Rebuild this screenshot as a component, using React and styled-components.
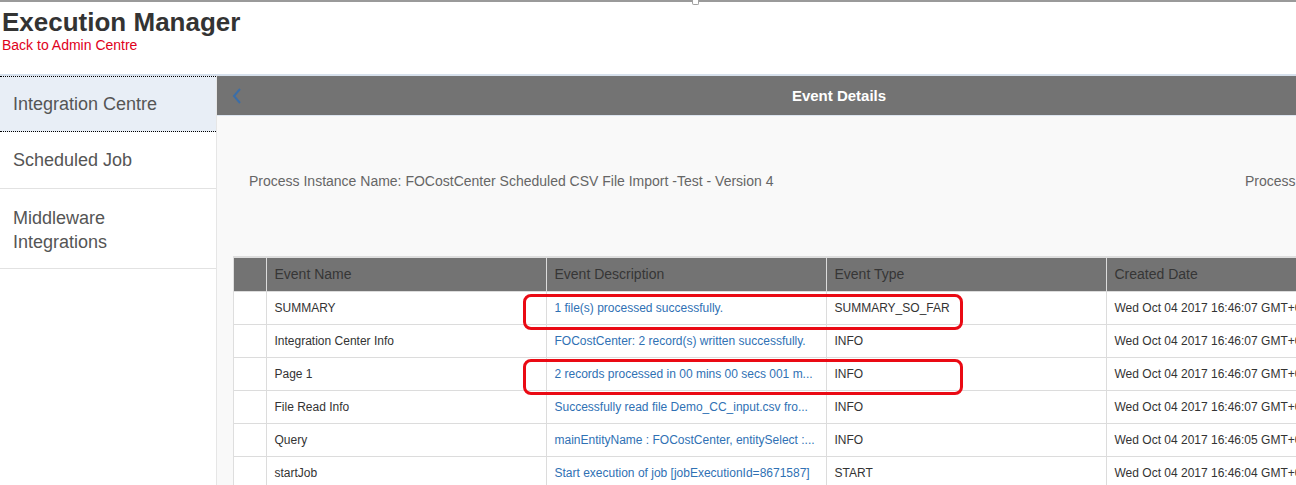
import React from "react";
import styled, { createGlobalStyle } from "styled-components";

const GlobalStyle = createGlobalStyle`
  html, body {
    margin: 0;
    padding: 0;
    background: #ffffff;
    overflow: hidden;
  }
  body {
    font-family: "Liberation Sans", Arial, sans-serif;
    color: #333;
  }
`;

// descriptions are cut the way the grid shows them
const rows = [
  {
    name: "SUMMARY",
    desc: "1 file(s) processed successfully.",
    type: "SUMMARY_SO_FAR",
    date: "Wed Oct 04 2017 16:46:07 GMT+0",
  },
  {
    name: "Integration Center Info",
    desc: "FOCostCenter: 2 record(s) written successfully.",
    type: "INFO",
    date: "Wed Oct 04 2017 16:46:07 GMT+0",
  },
  {
    name: "Page 1",
    desc: "2 records processed in 00 mins 00 secs 001 m...",
    type: "INFO",
    date: "Wed Oct 04 2017 16:46:07 GMT+0",
  },
  {
    name: "File Read Info",
    desc: "Successfully read file Demo_CC_input.csv fro...",
    type: "INFO",
    date: "Wed Oct 04 2017 16:46:07 GMT+0",
  },
  {
    name: "Query",
    desc: "mainEntityName : FOCostCenter, entitySelect :...",
    type: "INFO",
    date: "Wed Oct 04 2017 16:46:05 GMT+0",
  },
  {
    name: "startJob",
    desc: "Start execution of job [jobExecutionId=8671587]",
    type: "START",
    date: "Wed Oct 04 2017 16:46:04 GMT+0",
  },
];

const navItems = [
  { label: "Integration Centre", active: true },
  { label: "Scheduled Job" },
  { label: "Middleware Integrations", tall: true },
];

export default function App() {
  return (
    <>
      <GlobalStyle />
      <Page>
        <TopRule>
          <Handle />
        </TopRule>
        <Header>
          <Title>Execution Manager</Title>
          <BackLink href="#">Back to Admin Centre</BackLink>
        </Header>
        <Body>
          <Sidebar>
            {navItems.map((item) => (
              <NavItem key={item.label} active={item.active} tall={item.tall}>
                <span>{item.label}</span>
              </NavItem>
            ))}
          </Sidebar>
          <Main>
            <TitleBar>
              <BackButton>
                <svg width="10" height="16" viewBox="0 0 10 16">
                  <polyline
                    points="8,1 2,8 8,15"
                    fill="none"
                    stroke="#3b6ea8"
                    strokeWidth="2"
                  />
                </svg>
              </BackButton>
              <BarTitle>Event Details</BarTitle>
            </TitleBar>
            <Info>
              <InfoText>
                Process Instance Name: FOCostCenter Scheduled CSV File Import
                -Test - Version 4
              </InfoText>
              <InfoText>Process Instance ID: 8671587</InfoText>
            </Info>
            <TableWrap>
              <Table>
                <colgroup>
                  <col style={{ width: 32 }} />
                  <col style={{ width: 280 }} />
                  <col style={{ width: 280 }} />
                  <col style={{ width: 280 }} />
                  <col style={{ width: 280 }} />
                </colgroup>
                <thead>
                  <tr>
                    <Th />
                    <Th>Event Name</Th>
                    <Th>Event Description</Th>
                    <Th>Event Type</Th>
                    <Th>Created Date</Th>
                  </tr>
                </thead>
                <tbody>
                  {rows.map((r) => (
                    <tr key={r.name}>
                      <Td />
                      <Td>{r.name}</Td>
                      <Td link>{r.desc}</Td>
                      <Td>{r.type}</Td>
                      <Td>{r.date}</Td>
                    </tr>
                  ))}
                </tbody>
              </Table>
              <Highlight top={36} />
              <Highlight top={101} />
            </TableWrap>
          </Main>
        </Body>
      </Page>
    </>
  );
}

const Page = styled.div`
  width: 1296px;
  height: 485px;
  overflow: hidden;
  display: flex;
  flex-direction: column;
`;

const TopRule = styled.div`
  height: 2px;
  background: #9a9a9a;
  position: relative;
  flex: none;
`;

const Handle = styled.div`
  position: absolute;
  left: 692px;
  top: 0;
  width: 5px;
  height: 4px;
  background: #fff;
  border: 1px solid #a0a0a0;
  border-top: none;
  border-radius: 0 0 2px 2px;
`;

const Header = styled.div`
  height: 74px;
  padding: 5px 2px 0;
  box-sizing: border-box;
  border-bottom: 2px solid #d6e0ec;
  flex: none;
`;

const Title = styled.h1`
  margin: 0;
  font-size: 26px;
  line-height: 30px;
  font-weight: bold;
  color: #333;
`;

const BackLink = styled.a`
  display: block;
  font-size: 14px;
  line-height: 16px;
  color: #e0001b;
  text-decoration: none;
`;

const Body = styled.div`
  flex: 1;
  display: flex;
  min-height: 0;
`;

const Sidebar = styled.nav`
  width: 216px;
  flex: none;
  border-right: 1px solid #e6e6e6;
  background: #fff;
`;

const NavItem = styled.div`
  height: ${(p) => (p.tall ? "80px" : p.active ? "56px" : "57px")};
  box-sizing: border-box;
  display: flex;
  align-items: center;
  padding-left: 13px;
  padding-right: 20px;
  font-size: 18px;
  line-height: 24px;
  color: #555;
  background: ${(p) => (p.active ? "#e8eef6" : "#fff")};
  border-top: ${(p) => (p.active ? "1px dotted #000" : "none")};
  border-bottom: ${(p) => (p.active ? "1px dotted #000" : "1px solid #e2e2e2")};
  span {
    display: block;
    padding-top: ${(p) => (p.tall ? "2px" : "0")};
  }
`;

const Main = styled.main`
  width: 1244px;
  flex: none;
  background: #f9f9f9;
  display: flex;
  flex-direction: column;
`;

const TitleBar = styled.div`
  height: 39px;
  flex: none;
  background: #737373;
  border-bottom: 1px solid #dde5f0;
  position: relative;
  display: flex;
  align-items: center;
  justify-content: center;
`;

const BackButton = styled.div`
  position: absolute;
  left: 15px;
  top: 12px;
  display: flex;
`;

const BarTitle = styled.div`
  color: #fff;
  font-size: 15px;
  font-weight: bold;
`;

const Info = styled.div`
  height: 140px;
  flex: none;
  display: grid;
  grid-template-columns: 996px auto;
  align-items: center;
  padding-left: 32px;
  padding-bottom: 11px;
  box-sizing: border-box;
  white-space: nowrap;
`;

const InfoText = styled.div`
  font-size: 14px;
  color: #666;
`;

const TableWrap = styled.div`
  position: relative;
  margin-left: 16px;
  border-top: 2px solid #dedede;
  border-left: 1px solid #dedede;
  width: 1200px;
`;

const Table = styled.table`
  border-collapse: collapse;
  table-layout: fixed;
  width: 1152px;
  background: #fff;
`;

const Th = styled.th`
  height: 33px;
  box-sizing: border-box;
  background: #737373;
  color: #363636;
  font-weight: normal;
  font-size: 14px;
  text-align: left;
  padding: 0 8px;
  border-right: 1px solid #dcdcdc;
  border-bottom: 1px solid #dcdcdc;
`;

const Td = styled.td`
  height: 33px;
  box-sizing: border-box;
  font-size: 12px;
  color: ${(p) => (p.link ? "#2f71b4" : "#333")};
  padding: 0 8px;
  border-right: 1px solid #dcdcdc;
  border-bottom: 1px solid #dcdcdc;
  white-space: nowrap;
  overflow: hidden;
  text-overflow: ellipsis;
`;

const Highlight = styled.div`
  position: absolute;
  left: 289px;
  top: ${(p) => p.top}px;
  width: 440px;
  height: 36px;
  box-sizing: border-box;
  border: 3px solid #ea0a14;
  border-radius: 8px;
  pointer-events: none;
`;
